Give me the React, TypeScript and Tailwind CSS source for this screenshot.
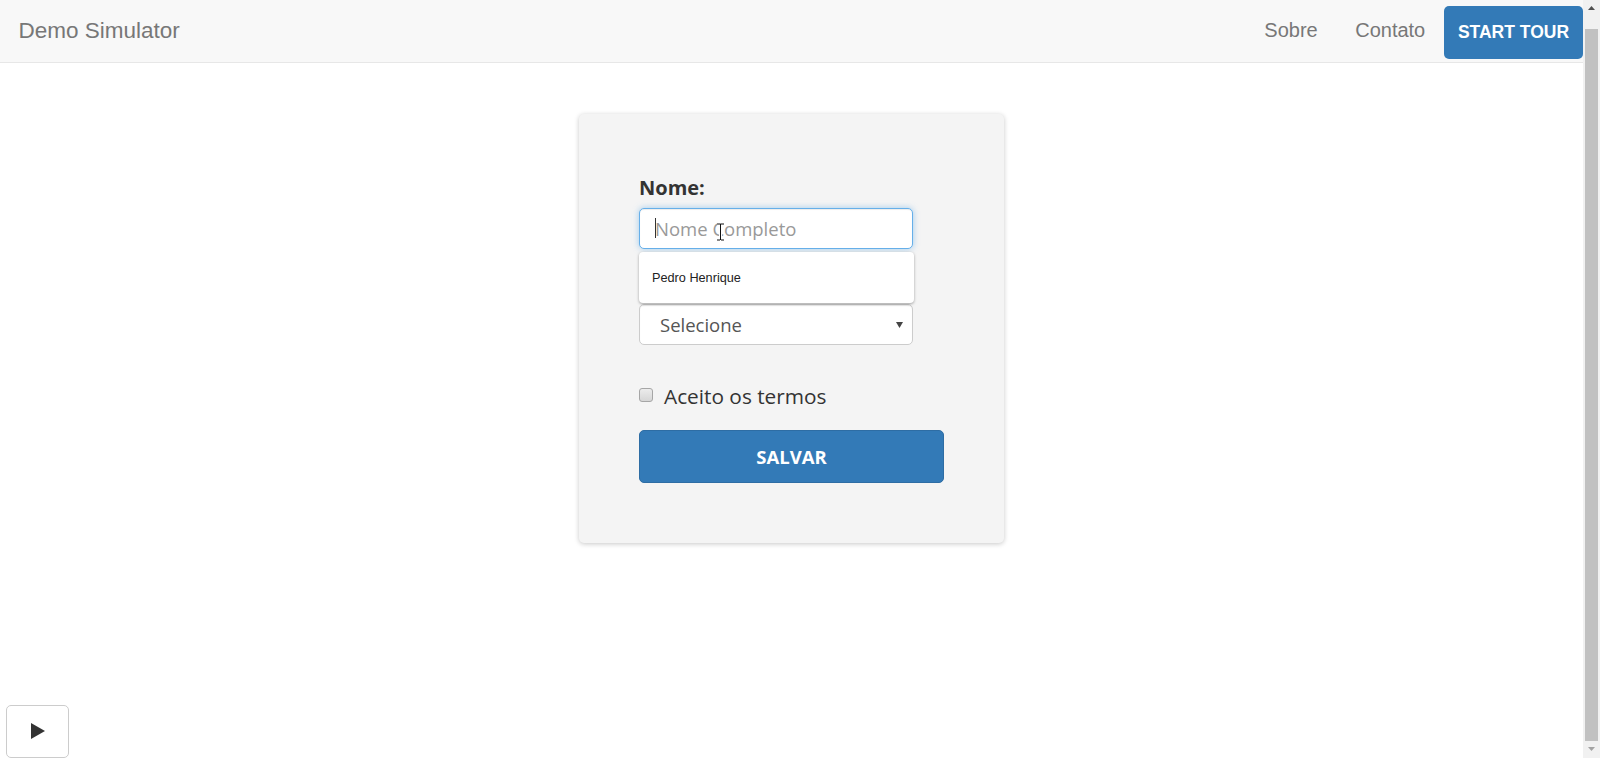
import { useState } from "react";

const NAV_LINKS = ["Sobre", "Contato"];

const ARIAL = "font-['Liberation_Sans',Arial,sans-serif]";
const BODY = "font-['Open_Sans','Noto_Sans',sans-serif]";

function IBeam() {
  return (
    <svg
      width="9"
      height="18"
      viewBox="0 0 9 18"
      className="pointer-events-none absolute left-[76px] top-[14px]"
    >
      <path d="M1 1h3M5 1h3M4.5 1v16M1 17h3M5 17h3" stroke="#fff" strokeWidth="3" fill="none" />
      <path d="M1 1h3M5 1h3M4.5 1v16M1 17h3M5 17h3" stroke="#111" strokeWidth="1" fill="none" />
    </svg>
  );
}

function Navbar() {
  return (
    <header className="flex h-[63px] items-start justify-between border-b border-[#e7e7e7] bg-[#f8f8f8]">
      <a className={`pl-[18.5px] pt-[17px] text-[22.5px] leading-[27px] text-[#777] ${ARIAL}`}>
        Demo Simulator
      </a>
      <nav className="flex items-start">
        {NAV_LINKS.map((label) => (
          <a
            key={label}
            className={`cursor-pointer px-[18.75px] pt-[18px] text-[20px] leading-[24px] text-[#777] ${ARIAL}`}
          >
            {label}
          </a>
        ))}
        <button
          type="button"
          className={`mt-[6px] h-[53px] w-[139px] rounded-[5px] bg-[#337ab7] text-[17.5px] font-bold text-white ${ARIAL}`}
        >
          START TOUR
        </button>
      </nav>
    </header>
  );
}

function FormCard() {
  const [accepted, setAccepted] = useState(false);

  return (
    <div className={`w-[425px] rounded-[5px] bg-[#f4f4f4] p-[60px] shadow-[0_1px_5px_rgba(0,0,0,0.22)] ${BODY}`}>
      <label className="mb-[6px] block text-[20px] font-bold leading-[28px] text-[#333]">Nome:</label>

      <div className="relative w-[274px]">
        <div className="relative h-[41px] rounded-[5px] border border-[#66afe9] bg-white shadow-[inset_0_1px_1px_rgba(0,0,0,0.075),0_0_6px_rgba(102,175,233,0.6)]">
          <input
            readOnly
            placeholder="Nome Completo"
            className="h-full w-full rounded-[5px] bg-transparent pl-[15px] text-[18.5px] text-[#555] outline-none placeholder:text-[#999]"
          />
          <span className="absolute left-[15px] top-[9px] h-[20px] w-px bg-[#333]" />
          <IBeam />
        </div>

        <div className="absolute left-0 top-[44px] z-10 flex h-[51px] w-[275px] items-center rounded-[4px] bg-white pl-[13px] pt-[2px] shadow-[0_1px_3px_rgba(0,0,0,0.35)]">
          <span className={`text-[12.7px] text-[#222] ${ARIAL}`}>Pedro Henrique</span>
        </div>
      </div>

      <div className="mt-[55px] flex h-[41px] w-[274px] items-center justify-between rounded-[5px] border border-[#ccc] bg-white pl-[20px] pr-[9px] shadow-[inset_0_1px_1px_rgba(0,0,0,0.075)]">
        <span className="text-[18.5px] text-[#555]">Selecione</span>
        <svg width="7" height="6" viewBox="0 0 7 6">
          <path d="M0 0h7L3.5 6z" fill="#444" />
        </svg>
      </div>

      <label className="mt-[38px] flex h-[26px] cursor-pointer items-center">
        <span
          onClick={() => setAccepted((v) => !v)}
          className="-mt-[2px] h-[14px] w-[14px] shrink-0 rounded-[3px] border border-[#a6a6a6] bg-gradient-to-b from-[#ececec] to-[#d6d6d6]"
        >
          {accepted && <span className="block text-center text-[10px] leading-[12px]">✓</span>}
        </span>
        <span className="ml-[11px] text-[20.8px] leading-[26px] text-[#333]">Aceito os termos</span>
      </label>

      <button
        type="button"
        className="mt-[21px] h-[53px] w-[305px] rounded-[5px] border border-[#2e6da4] bg-[#337ab7] text-[18.5px] font-bold text-white"
      >
        SALVAR
      </button>
    </div>
  );
}

function Scrollbar() {
  return (
    <div className="relative h-full w-[17px] shrink-0 bg-[#f1f1f1]">
      <svg width="7" height="4" viewBox="0 0 7 4" className="absolute left-[5px] top-[6px]">
        <path d="M3.5 0L7 4H0z" fill="#505050" />
      </svg>
      <div className="absolute left-[2px] top-[29px] h-[712px] w-[13px] bg-[#c1c1c1]" />
      <svg width="7" height="4" viewBox="0 0 7 4" className="absolute left-[5px] top-[747px]">
        <path d="M0 0h7L3.5 4z" fill="#a3a3a3" />
      </svg>
    </div>
  );
}

export default function App() {
  return (
    <div className="flex h-[758px] w-full overflow-hidden bg-white">
      <div className="relative min-w-0 flex-1">
        <Navbar />
        <main className="flex justify-center pt-[51px]">
          <FormCard />
        </main>
        <button
          type="button"
          aria-label="Play"
          className="absolute bottom-0 left-[6px] flex h-[53px] w-[63px] items-center justify-center rounded-[5px] border border-[#ccc] bg-white"
        >
          <svg width="14" height="16" viewBox="0 0 14 16" className="-mt-[2px]">
            <path d="M0 0L14 8L0 16z" fill="#333" />
          </svg>
        </button>
      </div>
      <Scrollbar />
    </div>
  );
}
